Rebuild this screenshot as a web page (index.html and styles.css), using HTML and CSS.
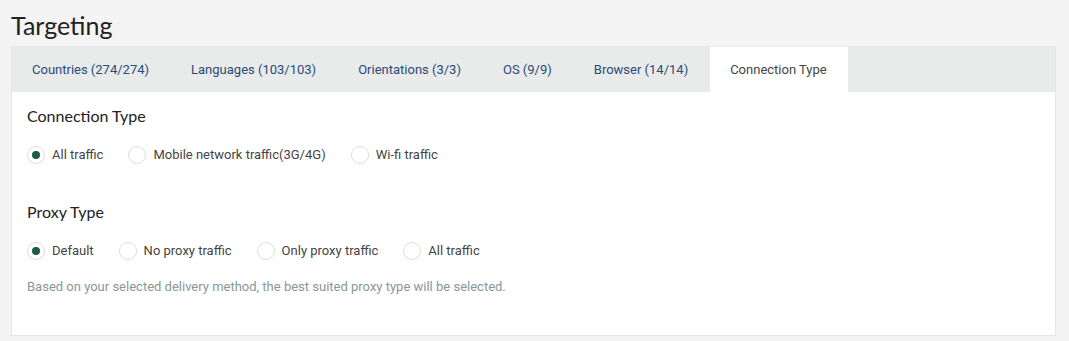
FILE: index.html
```html
<!DOCTYPE html>
<html lang="en">
<head>
    <meta charset="UTF-8">
    <meta name="viewport" content="width=device-width, initial-scale=1.0">
    <title>Targeting</title>
    <link rel="stylesheet" href="styles.css">
</head>
<body>
    <h1 class="page-title">Targeting</h1>

    <div class="card">
        <div class="tabs">
            <div class="tab">Countries (274/274)</div>
            <div class="tab">Languages (103/103)</div>
            <div class="tab">Orientations (3/3)</div>
            <div class="tab">OS (9/9)</div>
            <div class="tab">Browser (14/14)</div>
            <div class="tab active">Connection Type</div>
        </div>

        <div class="card-body">
            <div class="section">
                <h2>Connection Type</h2>
                <div class="radio-group">
                    <label class="radio"><span class="dot checked"></span>All traffic</label>
                    <label class="radio"><span class="dot"></span>Mobile network traffic(3G/4G)</label>
                    <label class="radio"><span class="dot"></span>Wi-fi traffic</label>
                </div>
            </div>

            <div class="section">
                <h2>Proxy Type</h2>
                <div class="radio-group">
                    <label class="radio"><span class="dot checked"></span>Default</label>
                    <label class="radio"><span class="dot"></span>No proxy traffic</label>
                    <label class="radio"><span class="dot"></span>Only proxy traffic</label>
                    <label class="radio"><span class="dot"></span>All traffic</label>
                </div>
                <p class="hint">Based on your selected delivery method, the best suited proxy type will be selected.</p>
            </div>
        </div>
    </div>
</body>
</html>
```

FILE: styles.css
```css
body {
    margin: 0;
    padding: 0 13px 0 11px;
    background-color: #f3f4f3;
    font-family: Roboto, "Liberation Sans", sans-serif;
    color: #444;
}

.page-title {
    margin: 0;
    padding-top: 10px;
    height: 36px;
    font-family: Lato, "Liberation Sans", sans-serif;
    font-weight: 400;
    font-size: 25px;
    line-height: 30px;
    color: #222;
}

.card {
    background: #fff;
    border: 1px solid #e3e6e5;
    border-top: none;
}

.tabs {
    display: flex;
    height: 46px;
    background: #e8ebea;
}

.tab {
    padding: 0 21px 0 20px;
    margin-right: 1px;
    font-size: 13px;
    line-height: 47px;
    color: #2a4a78;
}

.tab.active {
    margin-top: 1px;
    line-height: 45px;
    background: #fff;
    color: #444;
}

.card-body {
    padding: 13px 15px 40px;
}

.section h2 {
    margin: 0;
    font-family: Lato, "Liberation Sans", sans-serif;
    font-weight: 400;
    font-size: 16px;
    line-height: 22px;
    color: #222;
}

.section + .section {
    margin-top: 36px;
}

.radio-group {
    display: flex;
    gap: 25px;
    margin-top: 18px;
}

.radio {
    display: flex;
    align-items: center;
    gap: 7px;
    font-size: 13px;
    line-height: 20px;
    color: #444;
}

.dot {
    box-sizing: border-box;
    width: 18px;
    height: 18px;
    border: 1px solid #dcdedd;
    border-radius: 50%;
    display: flex;
    align-items: center;
    justify-content: center;
}

.dot.checked::after {
    content: "";
    width: 8px;
    height: 8px;
    border-radius: 50%;
    background: #1b5b4b;
}

.hint {
    margin: 18px 0 0;
    font-size: 13px;
    line-height: 16px;
    color: #8a9895;
}
```
